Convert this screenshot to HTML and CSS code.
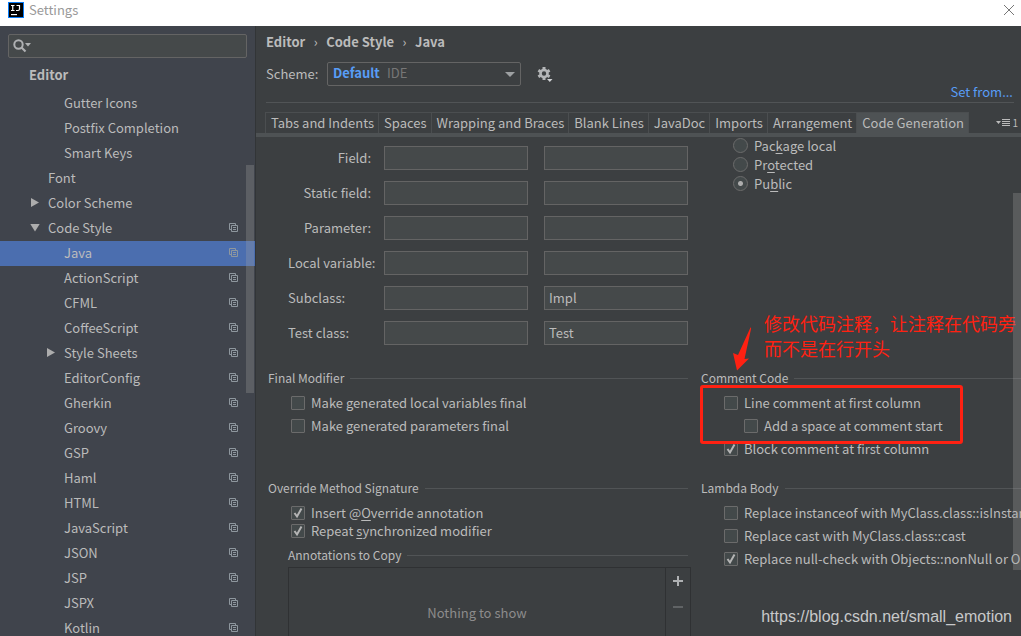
FILE: index.html
```html
<!DOCTYPE html>
<html lang="en">
<head>
<meta charset="utf-8">
<title>Settings</title>
<link rel="stylesheet" href="styles.css">
</head>
<body>
<svg class="sprite" aria-hidden="true">
  <symbol id="copy" viewBox="0 0 9 9"><path d="M2 6.500H.5V.5h6V2M2.500 2.500h6v6h-6zM4 4.500h3M4 6.500h3" fill="none" stroke="currentColor"/></symbol>
</svg>
<header class="titlebar">
  <svg class="app-icon" viewBox="0 0 16 16" aria-hidden="true"><rect width="16" height="16" fill="#087cfa"/><rect x="1" y="1" width="14" height="14" fill="#000"/><path d="M3 3.500h3.500M4.750 3.500v5M3 8.500h3.500M8.500 3.500h3v3.500q0 1.500-1.500 1.500H8" fill="none" stroke="#fff" stroke-width="1.200"/><path d="M3 12h6v1.200H3z" fill="#fff"/></svg>
  <h1 class="title">Settings</h1>
  <button class="close" aria-label="Close"><svg viewBox="0 0 12 12"><path d="M1 1l10 10M11 1L1 11" stroke="#777" fill="none"/></svg></button>
</header>
<div class="window">
  <nav class="sidebar" aria-label="Settings categories">
    <div class="search">
      <svg viewBox="0 0 18 14" aria-hidden="true"><circle cx="5.500" cy="5.500" r="4.200" fill="none" stroke="#afb1b3" stroke-width="2"/><path d="M8.500 8.500l4 4" stroke="#afb1b3" stroke-width="2.200"/><path d="M12 4h6l-3 3.500z" fill="#afb1b3"/></svg>
      <input type="text" aria-label="Search settings">
    </div>
    <a class="group" href="#">Editor</a>
    <ul class="tree">
      <li><a class="deep" href="#">Gutter Icons</a></li>
      <li><a class="deep" href="#">Postfix Completion</a></li>
      <li><a class="deep" href="#">Smart Keys</a></li>
      <li><a href="#">Font</a></li>
      <li><a class="closed" href="#">Color Scheme</a></li>
      <li><a class="open" href="#">Code Style<svg><use href="#copy"/></svg></a></li>
      <li><a class="deep selected" href="#" aria-current="page">Java<svg><use href="#copy"/></svg></a></li>
      <li><a class="deep" href="#">ActionScript<svg><use href="#copy"/></svg></a></li>
      <li><a class="deep" href="#">CFML<svg><use href="#copy"/></svg></a></li>
      <li><a class="deep" href="#">CoffeeScript<svg><use href="#copy"/></svg></a></li>
      <li><a class="deep closed" href="#">Style Sheets<svg><use href="#copy"/></svg></a></li>
      <li><a class="deep" href="#">EditorConfig<svg><use href="#copy"/></svg></a></li>
      <li><a class="deep" href="#">Gherkin<svg><use href="#copy"/></svg></a></li>
      <li><a class="deep" href="#">Groovy<svg><use href="#copy"/></svg></a></li>
      <li><a class="deep" href="#">GSP<svg><use href="#copy"/></svg></a></li>
      <li><a class="deep" href="#">Haml<svg><use href="#copy"/></svg></a></li>
      <li><a class="deep" href="#">HTML<svg><use href="#copy"/></svg></a></li>
      <li><a class="deep" href="#">JavaScript<svg><use href="#copy"/></svg></a></li>
      <li><a class="deep" href="#">JSON<svg><use href="#copy"/></svg></a></li>
      <li><a class="deep" href="#">JSP<svg><use href="#copy"/></svg></a></li>
      <li><a class="deep" href="#">JSPX<svg><use href="#copy"/></svg></a></li>
      <li><a class="deep" href="#">Kotlin<svg><use href="#copy"/></svg></a></li>
    </ul>
    <span class="tree-thumb"></span>
  </nav>
  <main class="main">
    <div class="head">
      <div class="crumbs"><span>Editor</span><i>›</i><span>Code Style</span><i>›</i><span>Java</span></div>
      <div class="scheme">
        <label for="scheme">Scheme:</label>
        <div class="combo">
          <select id="scheme"><option>Default</option></select>
          <span class="scope">IDE</span>
          <svg viewBox="0 0 10 5" aria-hidden="true"><path d="M0 0h10L5 5z" fill="#9da0a2"/></svg>
        </div>
        <button class="gear" aria-label="Scheme actions"><svg viewBox="0 0 16 16"><g fill="none" stroke="#b4b6b8"><circle cx="7" cy="7.500" r="3.500" stroke-width="2.600"/><path d="M7 1v2.500M7 11.500v2.500M1.400 4.300l2 1.200M10.600 9.500l2 1.200M1.400 10.700l2-1.200M10.600 5.500l2-1.200" stroke-width="3"/></g><path d="M9 12h7v4H9z" fill="#3c3f41"/><path d="M10 13h5.500l-2.700 3z" fill="#d0d2d4"/></svg></button>
      </div>
      <a class="set-from" href="#">Set from...</a>
    </div>
    <div class="tabbar">
      <div class="tabs" role="tablist">
        <button role="tab">Tabs and Indents</button><button role="tab">Spaces</button><button role="tab">Wrapping and Braces</button><button role="tab">Blank Lines</button><button role="tab">JavaDoc</button><button role="tab">Imports</button><button role="tab">Arrangement</button><button role="tab" class="active" aria-selected="true">Code Generation</button>
      </div>
      <button class="more" aria-label="More tabs"><svg viewBox="0 0 14 9" aria-hidden="true"><path d="M0 3h5L2.500 6z" fill="#bbb"/><path d="M6 1.500h8M6 3.500h8M6 5.500h8M6 7.500h8" stroke="#bbb"/></svg>1</button>
    </div>
    <div class="viewport">
      <form class="content">
        <div class="fields">
          <label for="f1">Field:</label><input id="f1"><input aria-label="Field suffix">
          <label for="f2">Static field:</label><input id="f2"><input aria-label="Static field suffix">
          <label for="f3">Parameter:</label><input id="f3"><input aria-label="Parameter suffix">
          <label for="f4">Local variable:</label><input id="f4"><input aria-label="Local variable suffix">
          <label class="left" for="f5">Subclass:</label><input id="f5"><input aria-label="Subclass suffix" value="Impl">
          <label class="left" for="f6">Test class:</label><input id="f6"><input aria-label="Test class suffix" value="Test">
        </div>
        <div class="radios">
          <label><input type="radio" name="vis"><span>Pac<u>k</u>age local</span></label>
          <label><input type="radio" name="vis"><span>Pr<u>o</u>tected</span></label>
          <label><input type="radio" name="vis" checked><span>Pu<u>b</u>lic</span></label>
        </div>
        <section>
          <h2>Final Modifier</h2>
          <div class="checks">
            <label><input type="checkbox"><span>Make generated local variables final</span></label>
            <label><input type="checkbox"><span>Make generated parameters final</span></label>
          </div>
        </section>
        <section class="comment">
          <h2>Comment Code</h2>
          <div class="checks">
            <label><input type="checkbox"><span>Line comment at first column</span></label>
            <label class="nested"><input type="checkbox"><span>Add a space at comment start</span></label>
            <label><input type="checkbox" checked><span>Block comment at first column</span></label>
          </div>
          <div class="highlight"></div>
          <svg class="arrow" viewBox="0 0 20 46" aria-hidden="true"><path d="M18.500 2.500Q19.500 2 19 4L12.500 34l4.500-.5L5 45.500 1 28l5 2z" fill="#ff2112"/></svg>
          <p class="note" lang="zh">修改代码注释，让注释在代码旁<br>而不是在行开头</p>
        </section>
        <section>
          <h2>Override Method Signature</h2>
          <div class="checks tight">
            <label><input type="checkbox" checked><span>Insert @<u>O</u>verride annotation</span></label>
            <label><input type="checkbox" checked><span>Repeat <u>s</u>ynchronized modifier</span></label>
          </div>
          <div class="annotations">
            <h2>Annotations to Copy</h2>
            <div class="list">
              <p>Nothing to show</p>
              <div class="tools">
                <button type="button" aria-label="Add"><svg viewBox="0 0 10 10"><path d="M5 0v10M0 5h10" stroke="#afb1b3" stroke-width="2"/></svg></button>
                <button type="button" aria-label="Remove" disabled><svg viewBox="0 0 10 10"><path d="M0 5h10" stroke="#606365" stroke-width="2"/></svg></button>
              </div>
            </div>
          </div>
        </section>
        <section>
          <h2>Lambda Body</h2>
          <div class="checks">
            <label><input type="checkbox"><span>Replace instanceof with MyClass.class::isInstance</span></label>
            <label><input type="checkbox"><span>Replace cast with MyClass.class::cast</span></label>
            <label><input type="checkbox" checked><span>Replace null-check with Objects::nonNull or Objects::isNull</span></label>
          </div>
        </section>
      </form>
      <span class="content-thumb"></span>
    </div>
    <span class="watermark">https://blog.csdn.net/small_emotion</span>
  </main>
</div>
</body>
</html>
```
FILE: styles.css
```css
* { box-sizing: border-box; }
body {
  margin: 0;
  height: 100vh;
  display: flex;
  flex-direction: column;
  overflow: hidden;
  background: #3c3f41;
  color: #bbb;
  font: 13px/20px "Noto Sans CJK SC", sans-serif;
}
button, input, select { font: inherit; color: inherit; }
button { border: 0; padding: 0; background: none; }
a { color: inherit; text-decoration: none; }
h1, h2, p, ul { margin: 0; padding: 0; font: inherit; }
svg { display: block; flex: none; }
u { text-underline-offset: 2px; }
.sprite { position: absolute; width: 0; height: 0; }

.titlebar {
  flex: none;
  height: 26px;
  padding: 0 6px 6px 8px;
  display: flex;
  align-items: center;
  gap: 5px;
  background: #fff;
}
.app-icon { width: 16px; height: 16px; }
.title { flex: 1; color: #999; }
.close svg { width: 12px; height: 12px; }

.window { flex: 1; min-height: 0; display: flex; }

.sidebar {
  position: relative;
  flex: none;
  width: 256px;
  overflow: hidden;
  background: #40444c;
  border-right: 1px solid #323537;
}
.search {
  margin: 8px 8px 4px;
  height: 24px;
  padding: 0 4px;
  display: flex;
  align-items: center;
  gap: 4px;
  background: #45494a;
  border: 1px solid #646464;
  border-radius: 2px;
}
.search svg { width: 18px; height: 14px; }
.search input { flex: 1; min-width: 0; border: 0; background: none; outline: 0; }
.group { display: block; height: 29px; padding-left: 29px; line-height: 26px; font-weight: bold; }
.tree { list-style: none; }
.tree a {
  position: relative;
  display: flex;
  align-items: center;
  justify-content: space-between;
  height: 25px;
  padding: 0 17px 2px 48px;
}
.tree .deep { padding-left: 64px; }
.tree .selected { background: #4b6eaf; }
.tree svg { width: 9px; height: 9px; color: #8e979e; }
.closed::before, .open::before {
  content: "";
  position: absolute;
  left: 31px;
  width: 8px;
  height: 9px;
  background: #adadad;
  clip-path: polygon(0 0, 100% 50%, 0 100%);
}
.deep.closed::before { left: 47px; }
.open::before { left: 30px; width: 10px; height: 8px; clip-path: polygon(0 0, 100% 0, 50% 100%); }
.tree-thumb { position: absolute; right: 1px; top: 139px; width: 8px; height: 228px; background: rgba(166, 166, 166, .28); }

.main { position: relative; flex: 1; min-width: 0; display: flex; flex-direction: column; }
.head {
  position: relative;
  margin: 0 7px 0 10px;
  padding-top: 6px;
  height: 77px;
  border-bottom: 1px solid #515456;
}
.crumbs { display: flex; gap: 7px; font-weight: bold; }
.crumbs i { width: 7px; text-align: center; font-style: normal; font-weight: normal; }
.scheme { display: flex; align-items: center; margin-top: 10px; }
.scheme label { width: 61px; }
.combo { position: relative; display: flex; align-items: center; }
.combo select {
  appearance: none;
  width: 194px;
  height: 24px;
  padding: 0 5px 2px;
  color: #589df6;
  font-weight: bold;
  background: #3c3f41;
  border: 1px solid #646464;
  border-radius: 2px;
}
.combo .scope { position: absolute; left: 60px; top: 1px; color: #777; pointer-events: none; }
.combo svg { position: absolute; right: 6px; width: 10px; height: 5px; pointer-events: none; }
.gear { margin-left: 16px; }
.gear svg { width: 16px; height: 16px; }
.set-from { position: absolute; right: 1px; bottom: 0; color: #589df6; }

.tabbar {
  flex: none;
  margin-top: 9px;
  padding: 0 3px 0 9px;
  display: flex;
  justify-content: space-between;
  border-bottom: 4px solid #4e5254;
}
.tabs { display: flex; border: 1px solid #4b4e50; border-bottom: 0; }
.tabs button { height: 20px; padding: 0 4px 0 5px; line-height: 20px; white-space: nowrap; border-right: 1px solid #4b4e50; }
.tabs button:last-child { border-right: 0; }
.tabs .active { background: #4e5254; }
.more { display: flex; align-items: center; gap: 2px; font-size: 10px; }
.more svg { width: 14px; height: 9px; }

.viewport { position: relative; flex: 1; min-height: 0; overflow: hidden; }
.content {
  display: grid;
  grid-template-columns: 420px minmax(420px, 1fr);
  grid-template-rows: 231px 110px auto;
  column-gap: 13px;
  padding-left: 12px;
}
.fields {
  display: grid;
  grid-template-columns: minmax(0, 1fr) 144px 144px;
  grid-auto-rows: 24px;
  gap: 11px 16px;
  padding: 9px 0 0 20px;
  align-content: start;
  align-items: center;
}
.fields label { text-align: right; white-space: nowrap; margin-right: -3px; }
.fields .left { text-align: left; }
.fields input { width: 100%; height: 24px; padding: 0 4px 2px; background: #45494a; border: 1px solid #646464; }
.radios { padding-left: 32px; margin-top: -1px; }
.radios label { display: flex; align-items: center; gap: 6px; height: 19px; }
.radios input, .checks input { appearance: none; margin: 0; background: #43494a; border: 1px solid #6b6b6b; flex: none; }
.radios input { width: 15px; height: 15px; border-radius: 50%; }
.radios input:checked { background: radial-gradient(circle, #adadad 2px, #43494a 3px); }

section { position: relative; min-width: 0; }
h2 { display: flex; align-items: center; gap: 6px; font-size: 12px; line-height: 20px; }
h2::after { content: ""; flex: 1; height: 1px; background: #515456; }
.checks { padding: 3px 0 0 23px; }
.checks label { display: flex; align-items: center; gap: 6px; height: 23px; white-space: nowrap; }
.checks .nested { padding-left: 20px; }
.checks input { width: 14px; height: 14px; border-radius: 1px; }
.checks input:checked {
  background: #43494a url("data:image/svg+xml,%3Csvg xmlns='http://www.w3.org/2000/svg' viewBox='0 0 12 12'%3E%3Cpath d='M2.500 6l2.500 3.500 4.500-8' fill='none' stroke='%23b4b4b4' stroke-width='2'/%3E%3C/svg%3E") center / 12px 12px;
}
.tight { padding-top: 6px; }
.tight label { height: 18px; }
.annotations { margin: 5px 0 0 20px; }
.list { display: flex; height: 120px; margin: 2px -3px 0 0; border: 1px solid #2f3133; }
.list p { flex: 1; padding-top: 35px; text-align: center; color: #8c8c8c; }
.tools { width: 25px; border-left: 1px solid #2f3133; }
.tools button { display: grid; place-items: center; width: 24px; height: 26px; }
.tools svg { width: 10px; height: 10px; }
.content-thumb { position: absolute; right: 0; top: 56px; width: 8px; height: 377px; background: rgba(166, 166, 166, .28); }

.highlight { position: absolute; left: -1px; top: 17px; width: 263px; height: 59px; border: 3px solid #ff2112; border-radius: 3px; }
.arrow { position: absolute; left: 31px; top: -43px; width: 20px; height: 46px; }
.note { position: absolute; left: 63px; top: -57px; color: #ff2112; font: 18px/25px "Noto Sans CJK SC", sans-serif; white-space: nowrap; }
.watermark { position: absolute; right: 9px; bottom: 9px; color: #c8c9ca; font: 16px/20px "Liberation Sans", Arial, sans-serif; }
```
